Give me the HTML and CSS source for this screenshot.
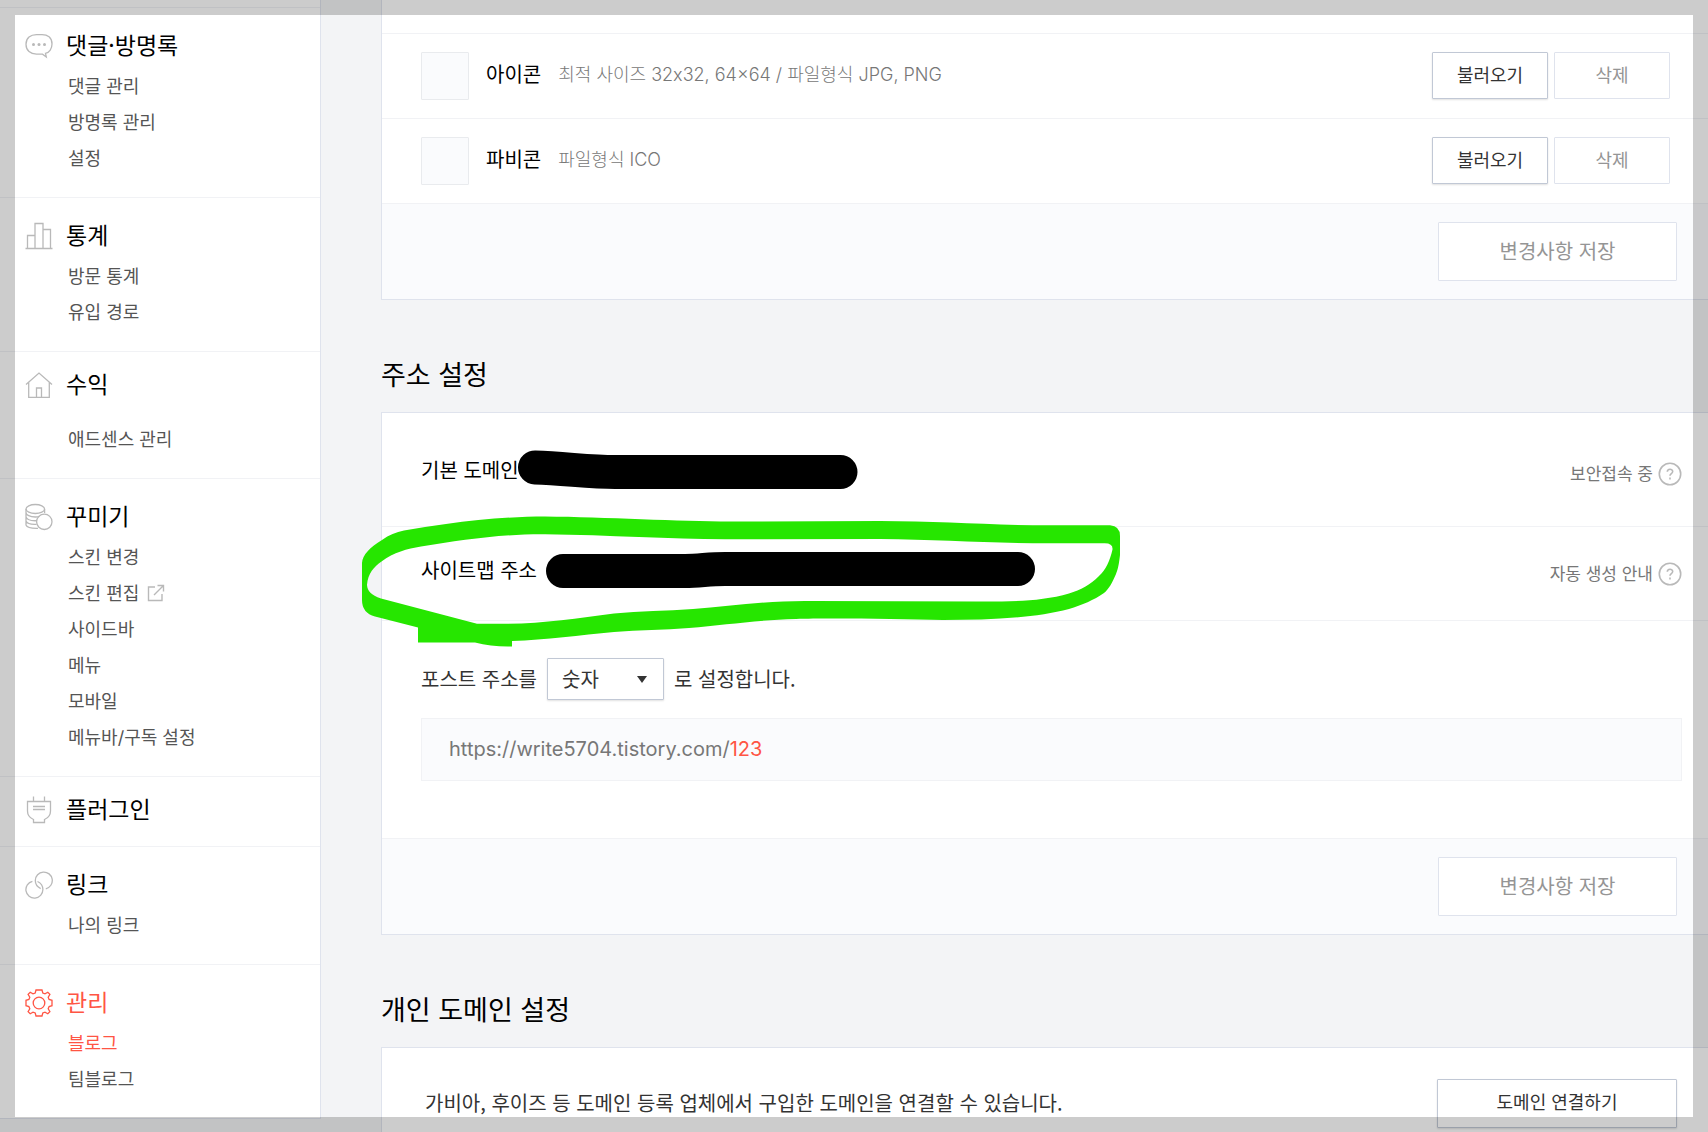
FILE: index.html
```html
<!DOCTYPE html>
<html lang="ko">
<head>
<meta charset="utf-8">
<meta name="viewport" content="width=device-width, initial-scale=1">
<title>블로그 관리</title>
<link rel="stylesheet" href="styles.css">
</head>
<body>
<div class="layout">
  <nav class="sidebar" aria-label="관리 메뉴">
    <section class="group">
      <h2 class="group-title">
        <svg class="icon" viewBox="0 0 28 28"><path d="M20.500 21.300C24.500 20.500 27 16.500 27 12C27 5.500 22.500 2.600 17 2.600H11.500C5.500 2.600 1 6 1 12.200C1 18.500 5.500 22.200 11.500 22.200H17.500L21.300 25Z"/><g class="solid"><circle cx="8.500" cy="12.500" r="1.500"/><circle cx="14" cy="12.500" r="1.500"/><circle cx="19.500" cy="12.500" r="1.500"/></g></svg>
        댓글·방명록
      </h2>
      <ul>
        <li><a href="#">댓글 관리</a></li>
        <li><a href="#">방명록 관리</a></li>
        <li><a href="#">설정</a></li>
      </ul>
    </section>
    <section class="group">
      <h2 class="group-title">
        <svg class="icon" viewBox="0 0 28 28"><path d="M.500 26.500H27.500M2.500 26.500V13.500H10M10 26.500V1.500H18V26.500M18 7.500H25.500V26.500"/></svg>
        통계
      </h2>
      <ul>
        <li><a href="#">방문 통계</a></li>
        <li><a href="#">유입 경로</a></li>
      </ul>
    </section>
    <section class="group group-spaced">
      <h2 class="group-title">
        <svg class="icon" viewBox="0 0 28 28"><path d="M1 13.500L14 2L27 13.500M3.700 11.500V26.300H24.300V11.500M11.500 26V17H16.500V26"/></svg>
        수익
      </h2>
      <ul>
        <li><a href="#">애드센스 관리</a></li>
      </ul>
    </section>
    <section class="group">
      <h2 class="group-title">
        <svg class="icon" viewBox="0 0 28 28"><ellipse cx="10.300" cy="6" rx="9.300" ry="4.500"/><path d="M1 6V9.500C1 12 5 14 10.300 14C12 14 13.500 13.800 14.500 13.400M19.600 6V10M1 9.500V13.500C1.500 16.500 6 18 12 17.700M1 13.500V18C2 20.500 6 21.600 11.500 21.300M1 18V22C2 24.500 6 25.500 13 25.300"/><circle cx="19.300" cy="18.800" r="7.700"/></svg>
        꾸미기
      </h2>
      <ul>
        <li><a href="#">스킨 변경</a></li>
        <li><a href="#">스킨 편집<svg class="external" viewBox="0 0 18 18"><path d="M8 3H1.500V16.500H15V10M7 11L16 2M10.500 1.500H16.500V7.500"/></svg></a></li>
        <li><a href="#">사이드바</a></li>
        <li><a href="#">메뉴</a></li>
        <li><a href="#">모바일</a></li>
        <li><a href="#">메뉴바/구독 설정</a></li>
      </ul>
    </section>
    <section class="group group-single">
      <h2 class="group-title">
        <svg class="icon" viewBox="0 0 28 28"><path d="M8.500 .500V5.500M19.500 .500V5.500M2.500 5.500H25.500V15C25.500 19 23 22 19.500 23.500V26.500H8.500V23.500C5 22 2.500 19 2.500 15ZM8 10.500H20M8 13.500H20"/></svg>
        플러그인
      </h2>
    </section>
    <section class="group">
      <h2 class="group-title">
        <svg class="icon" viewBox="0 0 28 28"><path d="M20.800 17.800A8.500 8.500 0 1 0 10.300 9.500C10.300 13.500 12.500 16 15.700 17.600M7.400 10.300A8.500 8.500 0 1 0 17.900 18.600C17.900 14.600 15.700 12 12.500 10.500"/></svg>
        링크
      </h2>
      <ul>
        <li><a href="#">나의 링크</a></li>
      </ul>
    </section>
    <section class="group group-active">
      <h2 class="group-title">
        <svg class="icon" viewBox="0 0 28 28"><path d="M11 1H17L17.800 4L20 4.900L22.800 3.300L24.900 5.400L23.200 8.200L24.100 10.500L27 11.300V16.700L24.100 17.500L23.200 19.800L24.900 22.600L22.800 24.700L20 23.100L17.800 24L17 27H11L10.200 24L8 23.100L5.200 24.700L3.100 22.600L4.800 19.800L3.900 17.500L1 16.700V11.300L3.900 10.500L4.800 8.200L3.100 5.400L5.200 3.300L8 4.900L10.200 4Z"/><circle cx="14" cy="14" r="5.800"/></svg>
        관리
      </h2>
      <ul>
        <li><a href="#" class="current" aria-current="page">블로그</a></li>
        <li><a href="#">팀블로그</a></li>
      </ul>
    </section>
  </nav>

  <main class="content">
    <section class="card card-first">
      <div class="file-row">
        <span class="thumb"></span>
        <h3 class="file-name">아이콘</h3>
        <p class="file-hint">최적 사이즈 32x32, 64×64 / 파일형식 JPG, PNG</p>
        <button type="button" class="btn btn-strong">불러오기</button>
        <button type="button" class="btn">삭제</button>
      </div>
      <div class="file-row">
        <span class="thumb"></span>
        <h3 class="file-name">파비콘</h3>
        <p class="file-hint">파일형식 ICO</p>
        <button type="button" class="btn btn-strong">불러오기</button>
        <button type="button" class="btn">삭제</button>
      </div>
      <footer class="card-footer"><button type="button" class="btn btn-save">변경사항 저장</button></footer>
    </section>

    <h2 class="section-title">주소 설정</h2>
    <section class="card">
      <div class="address-row address-row-first">
        <h3 class="address-name">기본 도메인</h3>
        <span class="help"><span>보안접속 중</span><svg viewBox="0 0 24 24"><circle cx="12" cy="12" r="10.700"/><path d="M9.300 9.800C9.300 6.400 14.700 6.400 14.700 9.600C14.700 11.600 12 11.700 12 13.800M12 15.600V17.400"/></svg></span>
      </div>
      <div class="address-row">
        <h3 class="address-name">사이트맵 주소</h3>
        <span class="help"><span>자동 생성 안내</span><svg viewBox="0 0 24 24"><circle cx="12" cy="12" r="10.700"/><path d="M9.300 9.800C9.300 6.400 14.700 6.400 14.700 9.600C14.700 11.600 12 11.700 12 13.800M12 15.600V17.400"/></svg></span>
      </div>
      <div class="post-address">
        <div class="post-choice">
          <label for="post-type">포스트 주소를</label>
          <span class="select-box">
            <select id="post-type"><option>숫자</option><option>문자</option></select>
            <svg class="arrow" viewBox="0 0 10 7"><path d="M0 0H10L5 7Z"/></svg>
          </span>
          <span>로 설정합니다.</span>
        </div>
        <p class="url">https://write5704.tistory.com/<em>123</em></p>
      </div>
      <footer class="card-footer"><button type="button" class="btn btn-save">변경사항 저장</button></footer>
      <svg class="marker" viewBox="381 412 760 240" aria-hidden="true">
        <path class="marker-green" fill-rule="evenodd" d="M362 563C362.500 555 370 547 382 540C389 535 396 532 404 530.500C418 528 432 526 446 524C480 519 515 516.500 545 516.500C605 517 680 521.500 730 521.500L880 521C940 521 990 525.300 1050 525.300H1110Q1120 526 1120 536V555C1119 564 1118 569 1116 574C1112 583 1109 589 1104 593C1094 600 1082 605 1069 609C1035 618 990 620 943 620C900 619 830 618 796 619C755 620 725 625 689 628C664 630 639 630 614 632C580 635 546 640 512 641V646.500Q492 647 475 642.500H418V627.500L375 616.500Q362 613 362 600ZM367 585C368 573 374 567 381.500 561.500C394 552 407 549 421 546.500C462 540 500 534 545 534.300C610 535 670 539.300 725 539.300L880 539C940 539.500 990 543.300 1050 543.300H1104Q1113 543 1112.500 549.500C1110 560 1106 570 1099 576C1090 585 1081 590 1069 593.500C1040 602 1007 601.500 976 601.500L814 601C773 600 732 606 693 609C666 611 640 611 614 613.500C578 618 544 623.700 507 623.700H477L381 598.500C371 595 367.500 591 367 585Z"/>
        <path class="marker-black" d="M535 467.500C565 468.500 590 472 615 472H840.500"/>
        <path class="marker-black" d="M563 571H685C700 571 708 569 725 569H1018"/>
      </svg>
    </section>

    <h2 class="section-title">개인 도메인 설정</h2>
    <section class="card card-last">
      <p>가비아, 후이즈 등 도메인 등록 업체에서 구입한 도메인을 연결할 수 있습니다.</p>
      <button type="button" class="btn btn-strong btn-connect">도메인 연결하기</button>
    </section>
  </main>
</div>
<div class="frame" aria-hidden="true"></div>
</body>
</html>
```

FILE: styles.css
```css
* { box-sizing: border-box; }

body {
  margin: 0;
  background: #f3f4f6;
  color: #333;
  font-family: "Noto Sans CJK KR", sans-serif;
  font-size: 20px;
  line-height: 28px;
}

h2, h3, p, ul { margin: 0; padding: 0; font-weight: 400; }
ul { list-style: none; }
a { color: inherit; text-decoration: none; }
button, select { font: inherit; color: inherit; }

.layout { display: flex; min-height: 100vh; }

/* sidebar */
.sidebar {
  flex: 0 0 321px;
  align-self: flex-start;
  padding-top: 7px;
  background: #fff;
  border-right: 1px solid #dfe3ed;
  border-bottom: 1px solid #dfe3ed;
}
.group { padding: 18px 0 20px 25px; border-top: 1px solid #f1f2f5; }
.group-title {
  display: flex;
  align-items: center;
  gap: 13px;
  height: 36px;
  margin-bottom: 7px;
  color: #000;
  font-size: 23px;
}
.group-spaced { padding-top: 13px; }
.group-spaced .group-title { margin-bottom: 21px; }
.group-single { padding: 13px 0 20px 25px; }
.group-single .group-title { margin-bottom: 0; }
.group li {
  padding-left: 43px;
  color: #555;
  font-family: Inter, "Noto Sans CJK KR", sans-serif;
  font-size: 18px;
  line-height: 36px;
}
.group-active .group-title, .group .current { color: #ff5544; }

.icon { width: 28px; height: 28px; margin-top: 3px; fill: none; stroke: #b9b9b9; stroke-width: 1.3; }
.icon .solid { fill: #b9b9b9; stroke: none; }
.group-active .icon { stroke: #ff5544; }
.external {
  width: 18px;
  height: 18px;
  margin-left: 8px;
  vertical-align: -2px;
  fill: none;
  stroke: #b9b9b9;
  stroke-width: 1.4;
}

/* content */
.content {
  flex: 1;
  min-width: 0;
  display: flex;
  flex-direction: column;
  padding-left: 60px;
}
.card {
  position: relative;
  background: #fff;
  border: 1px solid #dfe3ed;
  border-right: 0;
}
.card-first { padding-top: 33px; border-top: 0; }
.section-title {
  padding: 54px 0 18px;
  color: #000;
  font-size: 27px;
  line-height: 40px;
}

.btn {
  width: 116px;
  height: 47px;
  padding: 0 0 3px;
  background: #fff;
  border: 1px solid #dfe3ed;
  border-radius: 1px;
  color: #959595;
  font-size: 18px;
}
.btn-strong {
  border-color: #c1c8d5;
  box-shadow: 0 1px 2px rgba(0, 0, 0, .12);
  color: #333;
}
.btn-save { width: 239px; height: 59px; padding-bottom: 2px; font-size: 20px; }
.btn-connect { width: 240px; height: 49px; padding-bottom: 5px; }

.file-row {
  display: flex;
  align-items: flex-start;
  height: 85px;
  padding: 18px 38px 0 39px;
  border-top: 1px solid #f1f2f5;
}
.thumb {
  width: 48px;
  height: 48px;
  margin-right: 17px;
  background: #fafbfd;
  border: 1px solid #e9ebee;
  border-radius: 1px;
}
.file-name { margin-right: 17px; color: #000; font-size: 20px; line-height: 44px; }
.file-hint {
  flex: 1;
  color: #777;
  font-family: Inter, "Noto Sans CJK KR", sans-serif;
  font-size: 18px;
  font-weight: 300;
  line-height: 46px;
}
.file-row .btn + .btn { margin-left: 6px; }

.card-footer {
  display: flex;
  align-items: center;
  justify-content: flex-end;
  height: 96px;
  padding-right: 31px;
  background: #fafbfd;
  border-top: 1px solid #f1f2f5;
}

.address-row {
  display: flex;
  align-items: center;
  justify-content: space-between;
  height: 94px;
  padding: 0 26px 0 39px;
  border-bottom: 1px solid #f1f2f5;
}
.address-row-first { height: 114px; padding-top: 9px; }
.address-name { padding-bottom: 8px; color: #000; font-size: 20px; }
.help { display: flex; align-items: center; gap: 5px; color: #777; font-size: 17px; }
.help span { padding-bottom: 2px; }
.help svg { width: 24px; height: 24px; fill: none; stroke: #b9b9b9; stroke-width: 1.6; }

.post-address { padding: 37px 26px 57px 39px; }
.post-choice { display: flex; align-items: center; gap: 10px; margin-bottom: 18px; }
.select-box { position: relative; }
.select-box select {
  display: block;
  width: 117px;
  height: 42px;
  padding: 0 14px;
  appearance: none;
  background: #fff;
  border: 1px solid #c1c8d5;
  border-radius: 1px;
  box-shadow: 0 1px 2px rgba(0, 0, 0, .12);
}
.arrow { position: absolute; top: 18px; right: 17px; width: 10px; height: 7px; fill: #333; }
.url {
  padding: 16px 27px 17px;
  background: #fafbfd;
  border: 1px solid #f1f2f5;
  color: #777;
  font-family: Inter, "Noto Sans CJK KR", sans-serif;
}
.url em { color: #ff5544; font-style: normal; }

.card-last {
  flex: 1;
  display: flex;
  align-items: flex-start;
  justify-content: space-between;
  padding: 31px 31px 4px 43px;
  border-bottom: 0;
}
.card-last p { padding-top: 10px; }

/* hand-drawn marks laid over the address rows */
.marker {
  position: absolute;
  top: -1px;
  left: -1px;
  width: 760px;
  height: 240px;
  overflow: visible;
  pointer-events: none;
}
.marker-green { fill: #26e600; }
.marker-black { fill: none; stroke: #000; stroke-width: 34; stroke-linecap: round; }

/* translucent window frame */
.frame {
  position: fixed;
  inset: 0;
  border: 15px solid rgba(0, 0, 0, .2);
  pointer-events: none;
}
```
